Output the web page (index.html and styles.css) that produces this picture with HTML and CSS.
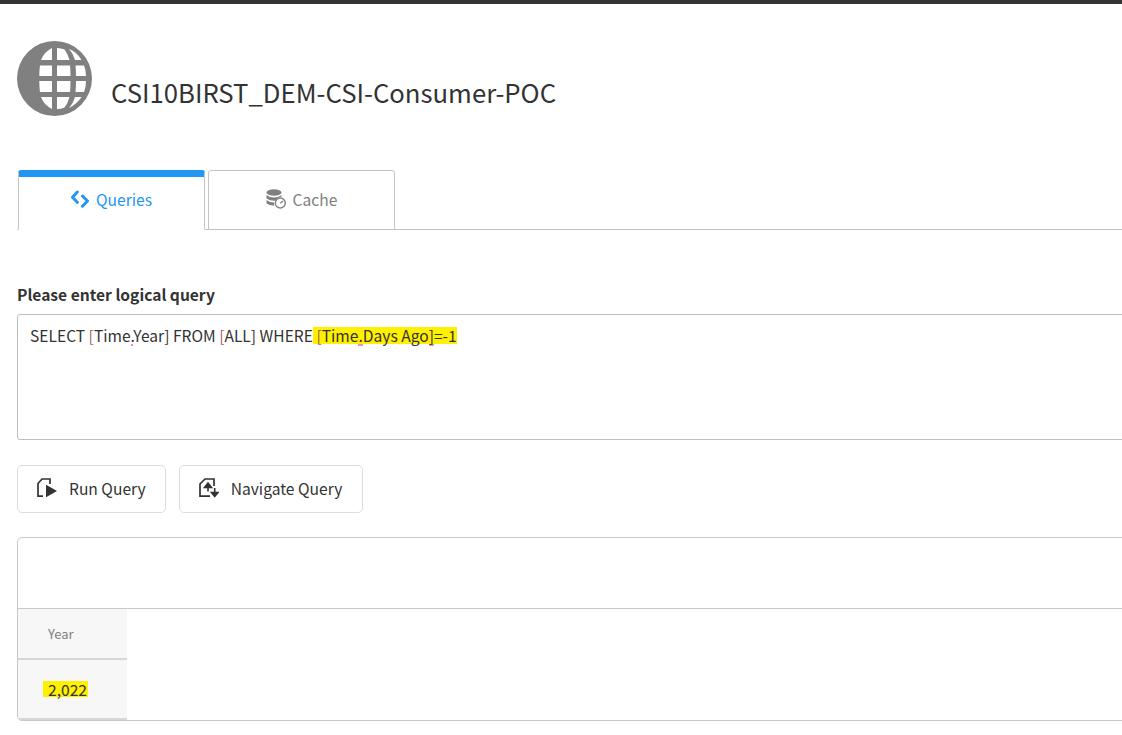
FILE: index.html
```
<!DOCTYPE html>
<html lang="en">
<head>
<meta charset="utf-8">
<title>CSI10BIRST_DEM-CSI-Consumer-POC</title>
<link rel="stylesheet" href="styles.css">
</head>
<body>
<div class="topbar"></div>
<main class="page">
  <header class="head">
    <svg class="globe" viewBox="0 0 75 75" aria-hidden="true">
      <circle cx="37.500" cy="37.500" r="37.500" fill="#808080"/>
      <g fill="#fff">
        <path d="M24 19 Q27 11 35 7 V19Z"/>
        <path d="M40 7 Q44 7 47.500 8.500 Q51 13 52.500 19 H40Z"/>
        <path d="M52 8 Q60 11 64.500 19 H58 Q56.500 13 52 8Z"/>
        <path d="M23 24.500 H35 V35 H22.300 Q22.300 29 23 24.500Z"/>
        <path d="M40 24.500 H53 Q53.500 29 53.500 35 H40Z"/>
        <path d="M58.500 24.500 H67 Q69 29 69 35 H59 Q59 29 58.500 24.500Z"/>
        <path d="M22.300 40 H35 V51 H23 Q22.300 46 22.300 40Z"/>
        <path d="M40 40 H53.500 Q53.500 46 53 51 H40Z"/>
        <path d="M59 40 H69 Q69 46 67 51 H58.500 Q59 46 59 40Z"/>
        <path d="M24 56 H35 V68 Q27 64 24 56Z"/>
        <path d="M40 56 H52.500 Q51 62 47.500 66.500 Q44 68 40 68Z"/>
        <path d="M58 56 H64.500 Q60 63 52 67 Q56.500 62 58 56Z"/>
      </g>
    </svg>
    <h1 class="title">CSI10BIRST_DEM-CSI-Consumer-POC</h1>
  </header>

  <nav class="tabs">
    <a class="tab tab-active">
      <svg class="tab-icon" viewBox="0 0 18 18" aria-hidden="true"><path d="M6.300 2 L1.500 7.300 L6.300 12.300 M11.500 6 L16.500 11 L11.500 16.200" fill="none" stroke="#2196f3" stroke-width="3" stroke-linecap="round" stroke-linejoin="round"/></svg>
      <span>Queries</span>
    </a>
    <a class="tab">
      <svg class="tab-icon tab-icon-cache" viewBox="0 0 20 20" aria-hidden="true">
        <ellipse cx="8" cy="3.500" rx="7.500" ry="3.200" fill="#808080"/>
        <path d="M.5 6 Q4 8.500 8 8.500 Q12 8.500 15.500 6 V7.500 Q11.500 8.500 9 11.800 Q4 12 .5 9.500Z M.5 11 Q4 13.500 8 13.500 Q7.800 15 8.200 16.700 Q3 16.500 .5 14.500Z" fill="#808080"/>
        <circle cx="14.300" cy="14" r="5" fill="#fff" stroke="#808080" stroke-width="1.400"/>
        <path d="M14.300 14.300 L17 12" stroke="#808080" stroke-width="1.400" fill="none"/>
      </svg>
      <span>Cache</span>
    </a>
  </nav>

  <label class="label">Please enter logical query</label>
  <div class="query">SELECT <span class="bracket">[</span>Time<span class="spell">.</span>Year] FROM <span class="bracket">[</span>ALL] WHERE<mark class="hl"> <span class="bracket">[</span>Time<span class="spell">.</span>Days Ago<span class="spell">]</span>=-1</mark></div>

  <div class="actions">
    <button class="btn" type="button">
      <svg class="btn-icon" viewBox="0 0 20 20" aria-hidden="true">
        <path d="M6 18.200 H1 V5.500 L5 1 H13 V6" fill="none" stroke="#333" stroke-width="1.700"/>
        <path d="M9 6.700 L20 13 L9 19.300Z" fill="#333"/>
      </svg>
      <span>Run Query</span>
    </button>
    <button class="btn btn-wide" type="button">
      <svg class="btn-icon" viewBox="0 0 20 20" aria-hidden="true">
        <path d="M11 18.200 H1 V6 L6 1 H15 V8" fill="none" stroke="#333" stroke-width="1.700"/>
        <path d="M9 13.500 V8 M5.500 9.500 L9 5 L12.500 9.500Z" fill="#333" stroke="#333" stroke-width="1.600"/>
        <path d="M15.700 10 V14.500 M12.500 14.500 H19 L15.700 18.500Z" fill="#333" stroke="#333" stroke-width="1.600"/>
      </svg>
      <span>Navigate Query</span>
    </button>
  </div>

  <section class="results">
    <div class="results-top"></div>
    <table class="grid">
      <thead><tr><th>Year</th></tr></thead>
      <tbody><tr><td><mark class="hl-cell">2,022</mark></td></tr></tbody>
    </table>
  </section>
</main>
</body>
</html>
```

FILE: styles.css
```
* { box-sizing: border-box; }
html, body { margin: 0; height: 100%; overflow: hidden; background: #fff; }
body { font-family: "Noto Sans CJK SC", "Noto Sans", sans-serif; color: #333; }

.topbar { height: 4px; background: #333; }
.page { width: 1160px; padding-left: 17px; }

.head { display: flex; align-items: flex-end; gap: 19px; height: 75px; margin-top: 37px; }
.globe { width: 75px; height: 75px; flex: none; }
.title { margin: 0 0 2px; font-size: 25.7px; line-height: 44px; font-weight: 400; color: #333; }

.tabs { display: flex; gap: 3px; height: 60px; margin-top: 54px; padding-left: 1px; border-bottom: 1px solid #c4c4c4; }
.tab { width: 187px; height: 60px; display: flex; align-items: center; justify-content: center; gap: 7px; padding-bottom: 3px; font-size: 15.6px; line-height: 24px; color: #808080; background: #fff; border: 1px solid #c4c4c4; border-radius: 3px 3px 0 0; }
.tab-active { color: #2196f3; border-top: 7px solid #2196f3; border-bottom-color: #fff; padding-bottom: 9px; }
.tab-icon { width: 18px; height: 18px; flex: none; }
.tab-icon-cache { width: 20px; height: 20px; }

.label { display: block; margin-top: 53px; font-size: 15.6px; line-height: 22px; font-weight: 700; color: #333; }
.query { height: 126px; margin-top: 9px; padding: 8px 12px; font-size: 15.6px; line-height: 24px; color: #333; border: 1px solid #bdbdbd; border-radius: 3px 0 0 3px; white-space: nowrap; }
.bracket { color: #a5605a; }
.hl { color: inherit; background: linear-gradient(#fff000, #fff000) left 3px / 100% 17px no-repeat; }
.spell { background: linear-gradient(#f48fb1, #f48fb1) left 20px / 100% 2px no-repeat; }

.actions { display: flex; gap: 13px; margin-top: 25px; }
.btn { height: 48px; display: flex; align-items: center; gap: 12px; padding: 0 19px 2px; font: inherit; font-size: 15.6px; line-height: 24px; color: #333; background: #fff; border: 1px solid #ddd; border-radius: 5px; }
.btn-wide { padding-right: 20px; }
.btn-icon { width: 20px; height: 20px; flex: none; }

.results { height: 184px; margin-top: 24px; border: 1px solid #c8c8c8; border-radius: 5px 0 0 5px; overflow: hidden; }
.results-top { height: 71px; border-bottom: 1px solid #c8c8c8; }
.grid { border-collapse: collapse; width: 109px; font-size: 15.6px; }
.grid th { height: 50px; padding: 0 0 0 30px; text-align: left; font-size: 13px; font-weight: 400; color: #808080; background: #f7f7f7; border-bottom: 2px solid #d6d6d6; }
.grid td { height: 60px; padding: 0 0 0 25px; text-align: left; color: #333; background: #f7f7f7; border-bottom: 2px solid #d6d6d6; }
.hl-cell { display: inline-block; padding: 0 1px 0 5px; line-height: 16px; background: #fff000; color: inherit; }
```
